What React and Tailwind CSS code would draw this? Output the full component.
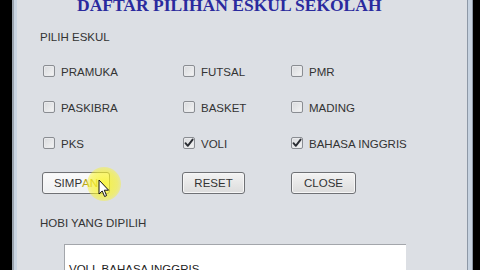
import React from "react";

function Check({ checked, label }) {
  return (
    <div className="flex items-center gap-[6px]">
      <div className="w-[12px] h-[12px] border border-[#8a8d92] rounded-[2px] bg-gradient-to-br from-[#d8dadd] to-[#f4f4f4] shadow-[inset_0_0_0_1px_#e9eaec] flex items-center justify-center">
        {checked && (
          <svg width="10" height="10" viewBox="0 0 10 10">
            <path d="M1.5 5.2 L3.8 7.8 L8.6 1.6" fill="none" stroke="#2a2d33" strokeWidth="1.9" strokeLinecap="round" strokeLinejoin="round" />
          </svg>
        )}
      </div>
      <span className="text-[11.5px] leading-[13px] text-[#333] pt-[2px]">{label}</span>
    </div>
  );
}

function Btn({ w, children, hot }) {
  return (
    <div
      className={`h-[22px] border border-[#6f7175] rounded-[3px] flex items-center justify-center text-[11.5px] leading-[13px] text-[#333] shadow-[inset_0_0_0_1px_#f6f6f6] ${
        hot ? "bg-gradient-to-b from-[#fbfbfb] to-[#eef0f2]" : "bg-gradient-to-b from-[#f3f3f3] to-[#dcdcdc]"
      }`}
      style={{ width: w }}
    >
      {children}
    </div>
  );
}

export default function App() {
  return (
    <div className="w-[480px] h-[270px] bg-black flex overflow-hidden" style={{ fontFamily: '"Liberation Sans", Arial, sans-serif' }}>
      <div className="w-[12px] shrink-0 bg-black" />
      <div className="w-[2px] shrink-0 bg-[#9aa3ad]" />
      <div className="w-[3px] shrink-0 bg-[#c9d4e1]" />
      <div className="w-[450px] shrink-0 bg-[#dcdfe4] relative overflow-hidden">
        <div
          className="h-[20px] mt-[-5px] pl-[60px] text-[17.5px] leading-[20px] font-bold text-[#2a2a9e] whitespace-nowrap"
          style={{ fontFamily: '"Liberation Serif", "Times New Roman", serif' }}
        >
          DAFTAR PILIHAN ESKUL SEKOLAH
        </div>
        <div className="mt-[16px] h-[13px] pl-[23px] text-[11.5px] leading-[13px] text-[#333]">PILIH ESKUL</div>
        <div className="mt-[9px] pl-[26px] grid grid-cols-[140px_108px_1fr] auto-rows-[36px] items-center">
          <Check label="PRAMUKA" />
          <Check label="FUTSAL" />
          <Check label="PMR" />
          <Check label="PASKIBRA" />
          <Check label="BASKET" />
          <Check label="MADING" />
          <Check label="PKS" />
          <Check label="VOLI" checked />
          <Check label="BAHASA INGGRIS" checked />
        </div>
        <div className="mt-[11px] pl-[25px] grid grid-cols-[140px_109px_1fr]">
          <Btn w={68} hot>
            <span>SIMP</span>
            <span className="text-[#b9a81c]">AN</span>
          </Btn>
          <Btn w={63}>RESET</Btn>
          <Btn w={65}>CLOSE</Btn>
        </div>
        <div className="mt-[23px] h-[13px] pl-[23px] text-[11.5px] leading-[13px] text-[#333]">HOBI YANG DIPILIH</div>
        <div className="mt-[14px] ml-[47px] w-[342px] h-[40px] bg-white border-t border-l border-[#a3a6ab] pl-[4px] pt-[18px] text-[11.5px] leading-[13px] text-[#222] whitespace-nowrap">
          VOLI, BAHASA INGGRIS
        </div>
        <div className="absolute left-[70px] top-[167px] w-[34px] h-[34px] rounded-full bg-[radial-gradient(circle,rgba(250,245,40,0.85)_0%,rgba(250,245,40,0.6)_55%,rgba(250,245,40,0)_100%)]" />
        <svg className="absolute left-[81px] top-[179px]" width="12" height="19" viewBox="0 0 12 19">
          <path d="M1 1 L1 15 L4.2 12 L6.6 17.5 L8.6 16.6 L6.3 11.2 L10.6 11.2 Z" fill="#fff" stroke="#111" strokeWidth="1" strokeLinejoin="round" />
        </svg>
      </div>
      <div className="w-[1px] shrink-0 bg-[#8d98a6]" />
      <div className="w-[4px] shrink-0 bg-[#c6d2e0]" />
      <div className="w-[1px] shrink-0 bg-[#8d98a6]" />
      <div className="flex-1 bg-black" />
    </div>
  );
}
